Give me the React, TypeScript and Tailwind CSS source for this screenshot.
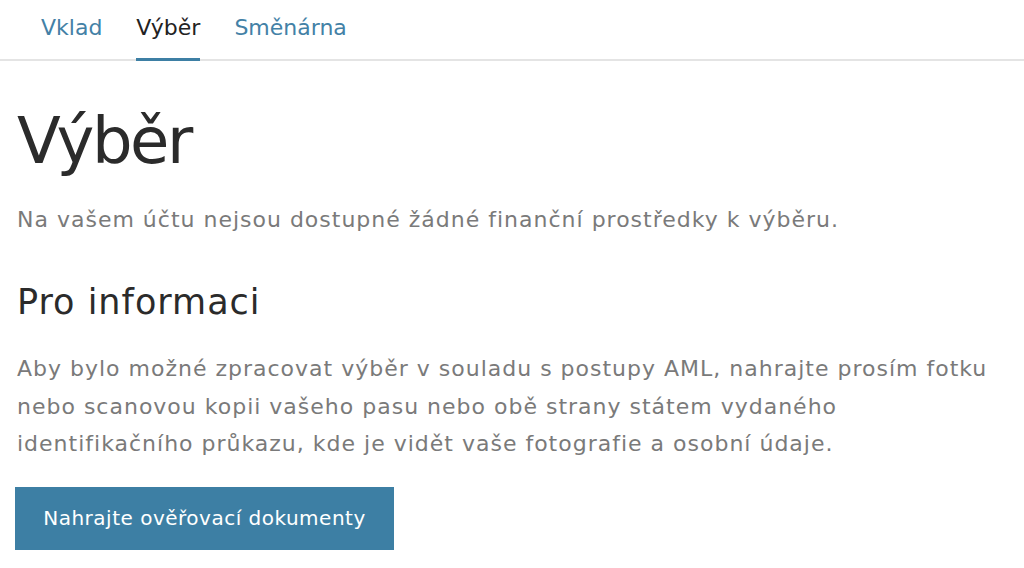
import React from 'react';

interface Tab {
  label: string;
  active?: boolean;
}

const tabs: Tab[] = [
  { label: 'Vklad' },
  { label: 'Výběr', active: true },
  { label: 'Směnárna' },
];

const App: React.FC = () => {
  return (
    <div className="min-h-[568px] bg-white font-['DejaVu_Sans',sans-serif]">
      {/* Tabs */}
      <nav className="border-b-2 border-[#e4e4e4]">
        <ul className="flex gap-[34px] pl-[41px]">
          {tabs.map((tab) => (
            <li key={tab.label}>
              <a
                href="#"
                className={
                  tab.active
                    ? 'block pt-[12px] pb-[14px] -mb-[2px] text-[22px] leading-[32px] text-[#222] border-b-[3px] border-[#3d7fa4]'
                    : 'block pt-[12px] pb-[14px] -mb-[2px] text-[22px] leading-[32px] text-[#4381a6] border-b-[3px] border-transparent'
                }
              >
                {tab.label}
              </a>
            </li>
          ))}
        </ul>
      </nav>

      {/* Content */}
      <main className="px-[17px]">
        <h1 className="mt-[40px] text-[64px] leading-[80px] tracking-[-2.5px] text-[#2b2b2b]">Výběr</h1>
        <p className="mt-[24px] text-[22px] leading-[30px] tracking-[1px] text-[#7a7a7a]">
          Na vašem účtu nejsou dostupné žádné finanční prostředky k výběru.
        </p>

        <h2 className="mt-[44px] text-[35px] leading-[46px] tracking-[1px] text-[#2b2b2b]">Pro informaci</h2>
        <p className="mt-[25px] max-w-[995px] text-[22px] leading-[37.5px] tracking-[1px] text-[#7a7a7a]">
          Aby bylo možné zpracovat výběr v souladu s postupy AML, nahrajte prosím fotku nebo
          scanovou kopii vašeho pasu nebo obě strany státem vydaného identifikačního průkazu, kde
          je vidět vaše fotografie a osobní údaje.
        </p>

        <button className="-ml-[2px] mt-[24px] h-[63px] w-[379px] bg-[#3d7fa4] text-[20px] tracking-[0.5px] text-white">
          Nahrajte ověřovací dokumenty
        </button>
      </main>
    </div>
  );
};

export default App;
